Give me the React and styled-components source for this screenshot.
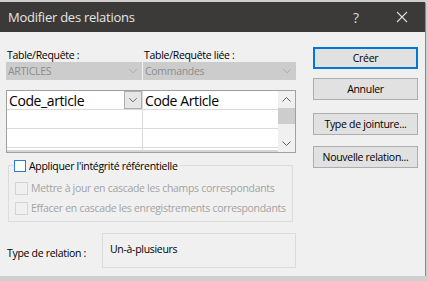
import React from "react";
import styled, { createGlobalStyle } from "styled-components";

const GlobalStyle = createGlobalStyle`
  html, body {
    margin: 0;
    padding: 0;
    background: #cfcfcf;
  }
  body {
    font-family: "Open Sans", "Noto Sans", sans-serif;
    font-size: 10.5px;
    letter-spacing: -0.3px;
    color: #000;
  }
`;

const Window = styled.div`
  margin-top: 2px;
  width: 425px;
  height: 274px;
  background: #f0f0f0;
  box-shadow: 1px 1px 0 #8a8a8a;
  display: flex;
  flex-direction: column;
`;

const TitleBar = styled.div`
  height: 30px;
  background: #3b3a38;
  color: #e6e6e6;
  display: flex;
  align-items: center;
  padding-left: 8px;
  font-size: 13px;
  letter-spacing: -0.25px;
`;

const Title = styled.div`
  flex: 1;
`;

const TitleButton = styled.div`
  width: 46px;
  height: 30px;
  display: flex;
  align-items: center;
  justify-content: center;
  color: #dcdcdc;
  font-size: 14px;
`;

const Body = styled.div`
  flex: 1;
  display: flex;
  padding: 0 7px 0 6px;
  gap: 17px;
`;

const LeftCol = styled.div`
  width: 290px;
  display: flex;
  flex-direction: column;
`;

const RightCol = styled.div`
  flex: 1;
  display: flex;
  flex-direction: column;
  padding-top: 15px;
`;

const LabelRow = styled.div`
  display: flex;
  gap: 1px;
  margin-top: 16px;
  height: 14px;
  align-items: center;
`;

const Label = styled.div`
  width: ${(p) => p.w}px;
  padding-left: 1px;
`;

const ComboRow = styled.div`
  display: flex;
  gap: 1px;
  height: 18px;
`;

const Combo = styled.div`
  width: ${(p) => p.w}px;
  background: #cccccc;
  color: #8c8c8c;
  display: flex;
  align-items: center;
  padding-left: 2px;
  box-sizing: border-box;
`;

const ComboText = styled.span`
  flex: 1;
`;

const ComboArrow = styled.svg`
  width: 16px;
  height: 16px;
  margin-right: 1px;
`;

const Grid = styled.div`
  margin-top: 10px;
  height: 63px;
  border: 1px solid #a0a0a0;
  background: #fff;
  display: flex;
  box-sizing: border-box;
  box-shadow: inset 0 -2px 0 #d6d6d6;
  overflow: hidden;
`;

const Cells = styled.div`
  flex: 1;
  display: flex;
  flex-direction: column;
`;

const GridRow = styled.div`
  display: flex;
  height: 18px;
  border-bottom: 1px solid #dadada;
  flex-shrink: 0;
`;

const Cell = styled.div`
  width: ${(p) => (p.w ? `${p.w}px` : "auto")};
  flex: ${(p) => (p.w ? "none" : 1)};
  border-right: ${(p) => (p.w ? "1px solid #dadada" : "none")};
  display: flex;
  align-items: center;
  font-size: 14px;
  letter-spacing: -0.4px;
  padding-left: 2px;
  box-sizing: border-box;
`;

const CellText = styled.span`
  flex: 1;
`;

const DropButton = styled.div`
  width: 18px;
  height: 18px;
  background: #e6e6e6;
  border: 1px solid #adadad;
  box-sizing: border-box;
  display: flex;
  align-items: center;
  justify-content: center;
`;

const Scrollbar = styled.div`
  width: 17px;
  background: #f0f0f0;
  display: flex;
  flex-direction: column;
  align-items: center;
`;

const ScrollArrow = styled.svg`
  width: 17px;
  height: 17px;
  flex-shrink: 0;
`;

const ScrollThumb = styled.div`
  width: 17px;
  height: 16px;
  background: #cdcdcd;
`;

const ScrollTrack = styled.div`
  flex: 1;
`;

const Group = styled.div`
  margin-top: 12px;
  margin-left: 2px;
  margin-right: 3px;
  height: 57px;
  border: 1px solid #dcdcdc;
  box-sizing: border-box;
  position: relative;
  padding: 15px 0 0 6px;
  display: flex;
  flex-direction: column;
  gap: 6px;
`;

const Legend = styled.label`
  position: absolute;
  top: -7px;
  left: 5px;
  background: #f0f0f0;
  display: flex;
  align-items: center;
  gap: 3px;
  padding-right: 2px;
  white-space: nowrap;
`;

const Check = styled.span`
  width: ${(p) => (p.active ? 12 : 13)}px;
  height: ${(p) => (p.active ? 12 : 13)}px;
  border: 1px solid ${(p) => (p.active ? "#2f7ad6" : "#d4d4d4")};
  background: ${(p) => (p.active ? "#fff" : "#f0f0f0")};
  box-sizing: border-box;
  display: inline-block;
  flex-shrink: 0;
`;

const CheckRow = styled.label`
  display: flex;
  align-items: center;
  gap: 3px;
  color: ${(p) => (p.disabled ? "#a3a3a3" : "#000")};
  height: 14px;
  white-space: nowrap;
`;

const RelationRow = styled.div`
  margin-top: 11px;
  display: flex;
  align-items: center;
`;

const RelationLabel = styled.div`
  width: 95px;
  padding-left: 1px;
  padding-top: 4px;
`;

const RelationBox = styled.div`
  width: 194px;
  height: 35px;
  border: 1px solid #dcdcdc;
  box-sizing: border-box;
  padding: 8px 0 0 7px;
`;

const Button = styled.button`
  width: 105px;
  height: 22px;
  margin-top: ${(p) => p.mt || 0}px;
  background: #e1e1e1;
  border: ${(p) => (p.primary ? "2px solid #0078d7" : "1px solid #adadad")};
  box-sizing: border-box;
  font-family: inherit;
  font-size: 10.5px;
  letter-spacing: -0.3px;
  color: #000;
  padding: 0;
`;

const Chevron = ({ up, color = "#8c8c8c" }) => (
  <path
    d={up ? "M4.5 10.5 L8.5 6.5 L12.5 10.5" : "M4.5 6.5 L8.5 10.5 L12.5 6.5"}
    fill="none"
    stroke={color}
    strokeWidth="1"
  />
);

const App = () => (
  <>
    <GlobalStyle />
    <Window>
      <TitleBar>
        <Title>Modifier des relations</Title>
        <TitleButton>?</TitleButton>
        <TitleButton>
          <svg width="12" height="12" viewBox="0 0 12 12">
            <path d="M1 1 L11 11 M11 1 L1 11" stroke="#dcdcdc" strokeWidth="1.1" />
          </svg>
        </TitleButton>
      </TitleBar>
      <Body>
        <LeftCol>
          <LabelRow>
            <Label w={136}>Table/Requête :</Label>
            <Label w={153}>Table/Requête liée :</Label>
          </LabelRow>
          <ComboRow>
            <Combo w={136}>
              <ComboText>ARTICLES</ComboText>
              <ComboArrow viewBox="0 0 17 17">
                <Chevron color="#a8a8a8" />
              </ComboArrow>
            </Combo>
            <Combo w={153}>
              <ComboText>Commandes</ComboText>
              <ComboArrow viewBox="0 0 17 17">
                <Chevron color="#a8a8a8" />
              </ComboArrow>
            </Combo>
          </ComboRow>
          <Grid>
            <Cells>
              <GridRow>
                <Cell w={136}>
                  <CellText>Code_article</CellText>
                  <DropButton>
                    <svg width="16" height="16" viewBox="0 0 17 17">
                      <Chevron color="#606060" />
                    </svg>
                  </DropButton>
                </Cell>
                <Cell>Code Article</Cell>
              </GridRow>
              <GridRow>
                <Cell w={136} />
                <Cell />
              </GridRow>
              <GridRow>
                <Cell w={136} />
                <Cell />
              </GridRow>
              <GridRow>
                <Cell w={136} />
                <Cell />
              </GridRow>
            </Cells>
            <Scrollbar>
              <ScrollArrow viewBox="0 0 17 17">
                <Chevron up color="#606060" />
              </ScrollArrow>
              <ScrollThumb />
              <ScrollTrack />
              <ScrollArrow viewBox="0 0 17 17">
                <Chevron color="#606060" />
              </ScrollArrow>
            </Scrollbar>
          </Grid>
          <Group>
            <Legend>
              <Check active />
              Appliquer l'intégrité référentielle
            </Legend>
            <CheckRow disabled>
              <Check />
              Mettre à jour en cascade les champs correspondants
            </CheckRow>
            <CheckRow disabled>
              <Check />
              Effacer en cascade les enregistrements correspondants
            </CheckRow>
          </Group>
          <RelationRow>
            <RelationLabel>Type de relation :</RelationLabel>
            <RelationBox>Un-à-plusieurs</RelationBox>
          </RelationRow>
        </LeftCol>
        <RightCol>
          <Button primary>Créer</Button>
          <Button mt={9}>Annuler</Button>
          <Button mt={13}>Type de jointure...</Button>
          <Button mt={11}>Nouvelle relation...</Button>
        </RightCol>
      </Body>
    </Window>
  </>
);

export default App;
